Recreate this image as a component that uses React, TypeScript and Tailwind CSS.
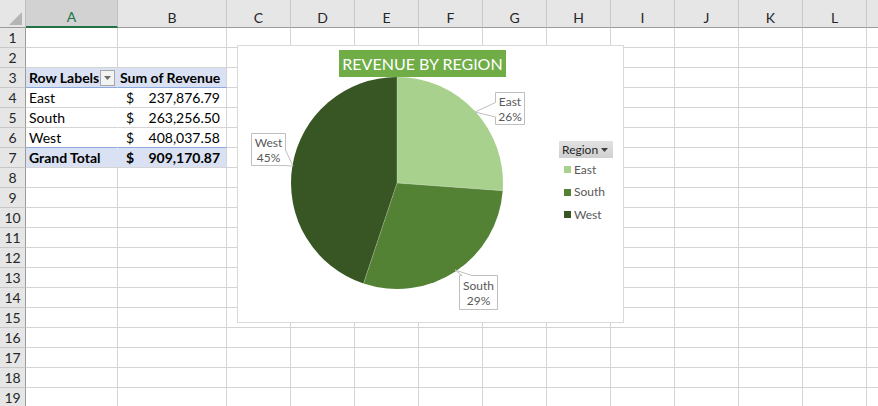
import React from "react";

const COLS = ["A", "B", "C", "D", "E", "F", "G", "H", "I", "J", "K", "L"];
const COLW = ["w-[92px]", "w-[109px]", "w-[64px]", "w-[64px]", "w-[64px]", "w-[64px]", "w-[64px]", "w-[64px]", "w-[64px]", "w-[64px]", "w-[64px]", "w-[64px]"];

function HeaderRow() {
  return (
    <div className="flex h-[28px]">
      <div className="relative w-[26px] shrink-0 bg-[#e6e6e6] border-r border-b border-r-[#bfbfbf] border-b-[#9b9b9b]">
        <svg className="absolute left-[9px] top-[12px]" width="13" height="13" viewBox="0 0 13 13">
          <polygon points="13,0 13,13 0,13" fill="#b5b5b5" />
        </svg>
      </div>
      {COLS.map((c, i) => (
        <div
          key={c}
          className={
            i === 0
              ? `${COLW[i]} shrink-0 flex items-center justify-center pt-[7px] bg-[#d2d2d2] border-r border-r-[#bfbfbf] border-b-2 border-b-[#217346] text-[#217346] text-[14px]`
              : `${COLW[i]} shrink-0 flex items-center justify-center pt-[8px] bg-[#e6e6e6] border-r border-r-[#c8c8c8] border-b border-b-[#9b9b9b] text-[#262626] text-[14px]`
          }
        >
          {c}
        </div>
      ))}
      <div className="flex-1 bg-[#e6e6e6] border-b border-b-[#9b9b9b]" />
    </div>
  );
}

function RowHead({ n }: { n: number }) {
  return (
    <div className="w-[26px] shrink-0 flex items-center justify-center bg-[#e6e6e6] border-r border-b border-r-[#9b9b9b] border-b-[#c8c8c8] text-[#262626] text-[14px]">
      {n}
    </div>
  );
}

function EmptyCells({ from }: { from: number }) {
  return (
    <>
      {COLW.slice(from).map((w, i) => (
        <div key={i} className={`${w} shrink-0 border-r border-b border-[#d4d4d4]`} />
      ))}
      <div className="flex-1 border-b border-[#d4d4d4]" />
    </>
  );
}

function PlainRow({ n }: { n: number }) {
  return (
    <div className="flex h-[20px]">
      <RowHead n={n} />
      <EmptyCells from={0} />
    </div>
  );
}

function FilterButton() {
  return (
    <div className="w-[15px] h-[16px] mr-[2px] flex items-center justify-center bg-[#f3f3f3] border border-[#a6a6a6]">
      <svg width="7" height="4" viewBox="0 0 7 4">
        <polygon points="0,0 7,0 3.5,4" fill="#6b6b6b" />
      </svg>
    </div>
  );
}

function PivotRow({
  n,
  label,
  amount,
  bold,
  header,
  fill,
  bottom,
}: {
  n: number;
  label: string;
  amount?: string;
  bold?: boolean;
  header?: boolean;
  fill?: boolean;
  bottom: string;
}) {
  const bg = fill ? "bg-[#d9e1f2]" : "bg-white";
  const rightA = fill ? "border-r-[#d9e1f2]" : "border-r-white";
  return (
    <div className="flex h-[20px]">
      <RowHead n={n} />
      <div className={`w-[92px] shrink-0 flex items-center justify-between pl-[3px] border-r border-b ${rightA} ${bottom} ${bg} ${bold ? "font-bold" : ""} text-black text-[14px] whitespace-nowrap`}>
        <span>{label}</span>
        {header && <FilterButton />}
      </div>
      {header ? (
        <div className={`w-[109px] shrink-0 flex items-center pl-[2px] border-r border-b border-r-[#d4d4d4] ${bottom} ${bg} font-bold text-black text-[14px] whitespace-nowrap`}>
          Sum of Revenue
        </div>
      ) : (
        <div className={`w-[109px] shrink-0 flex items-center justify-between pl-[8px] pr-[6px] border-r border-b border-r-[#d4d4d4] ${bottom} ${bg} ${bold ? "font-bold" : ""} text-black text-[14px] whitespace-nowrap`}>
          <span>$</span>
          <span>{amount}</span>
        </div>
      )}
      <EmptyCells from={2} />
    </div>
  );
}

function Chart() {
  return (
    <div className="absolute left-[237px] top-[45px] w-[387px] h-[278px] bg-white border border-[#d9d9d9]">
      <div className="absolute left-[101px] top-[4px] w-[167px] h-[27px] bg-[#70ad47] flex items-center justify-center text-white text-[16px] whitespace-nowrap">
        REVENUE BY REGION
      </div>
      <svg className="absolute left-[-1px] top-[-1px]" width="387" height="278" viewBox="0 0 387 278">
        <path d="M160,138 L160,32 A106,106 0 0 1 265.72,145.75 Z" fill="#a9d18e" />
        <path d="M160,138 L265.72,145.75 A106,106 0 0 1 126.49,238.56 Z" fill="#548235" />
        <path d="M160,138 L126.49,238.56 A106,106 0 0 1 160,32 Z" fill="#375623" />
        <path d="M160,138 L160,32 M160,138 L265.72,145.75 M160,138 L126.49,238.56" stroke="#ffffff" strokeOpacity="0.35" strokeWidth="0.7" />
        {/* East callout */}
        <path d="M258.5,47.5 L287.5,47.5 L287.5,79.5 L258.5,79.5 L258.5,72 L238,67 L258.5,57.5 Z" fill="#ffffff" stroke="#bfbfbf" strokeWidth="1" />
        {/* West callout */}
        <path d="M14.5,88.5 L48.5,88.5 L48.5,105 L56,121 L46,120.5 L14.5,120.5 Z" fill="#ffffff" stroke="#bfbfbf" strokeWidth="1" />
        {/* South callout */}
        <path d="M222.5,230.5 L225,230.5 L218,225 L235,230.5 L260.5,230.5 L260.5,264.5 L222.5,264.5 Z" fill="#ffffff" stroke="#bfbfbf" strokeWidth="1" />
      </svg>
      <div className="absolute left-[257px] top-[46px] w-[30px] h-[33px] flex flex-col items-center justify-center text-[#595959] text-[12px] leading-[15px]">
        <span>East</span>
        <span>26%</span>
      </div>
      <div className="absolute left-[13px] top-[87px] w-[35px] h-[33px] flex flex-col items-center justify-center text-[#595959] text-[12px] leading-[15px]">
        <span>West</span>
        <span>45%</span>
      </div>
      <div className="absolute left-[221px] top-[229px] w-[39px] h-[35px] flex flex-col items-center justify-center text-[#595959] text-[12px] leading-[15px]">
        <span>South</span>
        <span>29%</span>
      </div>
      {/* Legend */}
      <div className="absolute left-[321px] top-[95px] w-[54px] h-[17px] flex items-center justify-between pl-[3px] pr-[5px] bg-gradient-to-b from-[#e2e2e2] to-[#d0d0d0] text-[#262626] text-[12px]">
        <span>Region</span>
        <svg width="7" height="4" viewBox="0 0 7 4">
          <polygon points="0,0 7,0 3.5,4" fill="#404040" />
        </svg>
      </div>
      <div className="absolute left-[326px] top-[115px] flex flex-col gap-[5.5px] text-[#595959] text-[12px]">
        {[
          ["East", "bg-[#a9d18e]"],
          ["South", "bg-[#548235]"],
          ["West", "bg-[#375623]"],
        ].map(([t, c]) => (
          <div key={t} className="flex items-center gap-[3px] h-[17px]">
            <div className={`w-[7px] h-[7px] ${c}`} />
            <span>{t}</span>
          </div>
        ))}
      </div>
    </div>
  );
}

export default function App() {
  const rows: React.ReactNode[] = [];
  for (let n = 1; n <= 19; n++) {
    if (n === 3)
      rows.push(<PivotRow key={n} n={n} label="Row Labels" header bold fill bottom="border-b-[#8ea9db]" />);
    else if (n === 4) rows.push(<PivotRow key={n} n={n} label="East" amount="237,876.79" bottom="border-b-[#d4d4d4]" />);
    else if (n === 5) rows.push(<PivotRow key={n} n={n} label="South" amount="263,256.50" bottom="border-b-[#d4d4d4]" />);
    else if (n === 6) rows.push(<PivotRow key={n} n={n} label="West" amount="408,037.58" bottom="border-b-[#8ea9db]" />);
    else if (n === 7)
      rows.push(<PivotRow key={n} n={n} label="Grand Total" amount="909,170.87" bold fill bottom="border-b-[#d4d4d4]" />);
    else rows.push(<PlainRow key={n} n={n} />);
  }
  return (
    <div className="relative w-[878px] h-[406px] overflow-hidden bg-white font-[Lato,sans-serif]">
      <HeaderRow />
      {rows}
      <Chart />
    </div>
  );
}
